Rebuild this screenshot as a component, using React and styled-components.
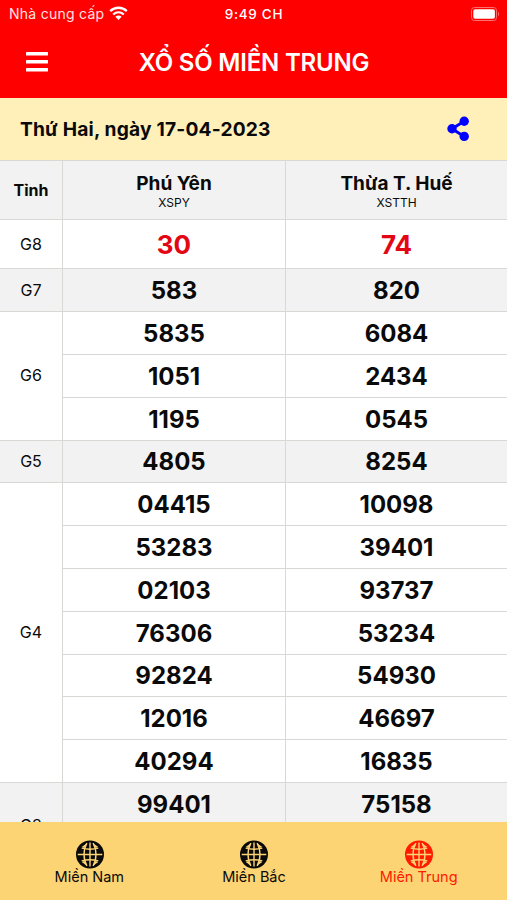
import React from 'react';
import styled, { createGlobalStyle } from 'styled-components';

const colors = {
  primary: '#ff0000',
  number: '#e30613',
  date: '#fff0b9',
  tab: '#fcd474',
  line: '#dad8d5',
  shade: '#f2f2f2',
};

const GlobalStyle = createGlobalStyle`
  * {
    box-sizing: border-box;
  }
  body {
    margin: 0;
    background: #fff;
    color: #0a0a0a;
    font-family: Inter, 'Liberation Sans', sans-serif;
  }
`;

const Screen = styled.div`
  height: 900px;
  display: flex;
  flex-direction: column;
  overflow: hidden;
`;

const Header = styled.header`
  flex: none;
  height: 98px;
  background: ${colors.primary};
  color: #fff;
`;

const StatusBar = styled.div`
  height: 27px;
  display: grid;
  grid-template-columns: 1fr auto 1fr;
  align-items: center;
  padding: 0 6px 0 9px;
`;

const Carrier = styled.div`
  display: flex;
  align-items: center;
  gap: 5px;
  font-size: 14px;
  letter-spacing: 0.26px;
  color: #ffe3e3;
`;

const Clock = styled.div`
  font-size: 13.5px;
  font-weight: 500;
  letter-spacing: 0.7px;
  padding-right: 2px;
`;

const BatterySlot = styled.div`
  display: flex;
  justify-content: flex-end;
`;

const TitleBar = styled.div`
  height: 70px;
  display: grid;
  grid-template-columns: 48px 1fr 48px;
  align-items: center;
  padding: 0 0 0 26px;
`;

const Title = styled.h1`
  margin: 0;
  padding: 2px 25px 0 0;
  text-align: center;
  font-size: 24px;
  line-height: 30px;
  font-weight: 600;
  letter-spacing: -0.2px;
  white-space: nowrap;
`;

const DateBar = styled.div`
  flex: none;
  height: 62px;
  display: flex;
  align-items: center;
  justify-content: space-between;
  padding: 0 37px 0 20px;
  background: ${colors.date};
  font-size: 19.2px;
  font-weight: 700;
  letter-spacing: 0.18px;
`;

const Results = styled.main`
  flex: 1;
  min-height: 0;
  overflow: hidden;
`;

const Row = styled.section`
  display: grid;
  grid-template-columns: 62px 1fr;
  border-top: 1px solid ${colors.line};
  background: ${({ $shaded }) => ($shaded ? colors.shade : '#fff')};
`;

const Label = styled.div`
  display: flex;
  align-items: center;
  justify-content: center;
  padding-bottom: 1px;
  font-size: 16px;
  font-weight: ${({ $bold }) => ($bold ? 700 : 400)};
`;

const Numbers = styled.div`
  display: grid;
  grid-template-columns: 223px 1fr;
`;

const Cell = styled.div`
  height: ${({ $height }) => $height}px;
  display: flex;
  flex-direction: column;
  align-items: center;
  justify-content: center;
  padding-top: 1px;
  border-left: 1px solid ${colors.line};
  border-top: ${({ $divided }) => ($divided ? `1px solid ${colors.line}` : 'none')};
  color: ${({ $special }) => ($special ? colors.number : '#0a0a0a')};
  font-size: ${({ $special }) => ($special ? 26 : 24)}px;
  font-weight: 700;
`;

const Province = styled.div`
  font-size: 19px;
  line-height: 24px;
  font-weight: 700;
`;

const Code = styled.div`
  font-size: 12px;
  line-height: 14px;
  font-weight: 400;
`;

const TabBar = styled.nav`
  flex: none;
  height: 78px;
  display: grid;
  grid-template-columns: repeat(3, 1fr);
  padding: 0 6px 0 7px;
  background: ${colors.tab};
`;

const Tab = styled.div`
  display: flex;
  flex-direction: column;
  align-items: center;
  padding-top: 18px;
  color: ${({ $active }) => ($active ? '#ff1a00' : '#0a0a0a')};
  font-size: 14.5px;
  line-height: 16px;
`;

const WifiIcon = () => (
  <svg width="19" height="15" viewBox="0 0 19 15" fill="none" stroke="#fff" strokeWidth="2.3">
    <path d="M1.2 5.2C6 .6 13 .6 17.8 5.2M4.2 8.5C7.4 5.6 11.6 5.6 14.8 8.5" />
    <path d="M6.4 10.8C8.3 9.2 10.7 9.2 12.6 10.8L9.5 14Z" fill="#fff" stroke="none" />
  </svg>
);

const BatteryIcon = () => (
  <svg width="30" height="14" viewBox="0 0 30 14">
    <rect x=".5" y=".5" width="25" height="13" rx="3" fill="none" stroke="#ff7070" />
    <rect x="2.3" y="2.3" width="21.6" height="9.4" rx="1.8" fill="#fff" />
    <path d="M27 4.5Q29.2 7 27 9.5Z" fill="#ff7070" />
  </svg>
);

const MenuIcon = () => (
  <svg width="22" height="20" viewBox="0 0 22 20" fill="#fff">
    <rect y="0" width="22" height="3.6" rx=".5" />
    <rect y="8" width="22" height="3.6" rx=".5" />
    <rect y="16" width="22" height="3.6" rx=".5" />
  </svg>
);

const ShareIcon = () => (
  <svg width="23" height="26" viewBox="0 0 23 26" fill="#0000ff">
    <path d="M17.2 5.2L5 12.8L17.2 20.4" fill="none" stroke="#0000ff" strokeWidth="3" />
    <circle cx="17.2" cy="5.2" r="4.7" />
    <circle cx="5" cy="12.8" r="4.7" />
    <circle cx="17.2" cy="20.4" r="4.7" />
  </svg>
);

const GlobeIcon = () => (
  <svg width="29" height="29" viewBox="0 0 29 29">
    <circle cx="15" cy="14.5" r="14" fill="currentColor" />
    <g fill="none" stroke={colors.tab} strokeWidth="1.4">
      <path d="M15 2.5V26.5M2.7 14.5H27.3" />
      <path d="M6.7 8.1Q15 10.3 23.3 8.1M6.7 20.9Q15 18.7 23.3 20.9" />
      <path d="M11.9 3.1C8.1 9.5 8.1 19.5 11.9 25.9M18.1 3.1C21.9 9.5 21.9 19.5 18.1 25.9" />
    </g>
    <g fill={colors.tab}>
      <path d="M12.3 3.1L6.7 6.9L9.3 8.1ZM17.7 3.1L23.3 6.9L20.7 8.1Z" />
      <path d="M12.3 25.9L6.7 22.1L9.3 20.9ZM17.7 25.9L23.3 22.1L20.7 20.9Z" />
    </g>
  </svg>
);

const prizes = [
  { label: 'G8', values: [['30', '74']], height: 48, special: true },
  { label: 'G7', values: [['583', '820']], shaded: true },
  { label: 'G6', values: [['5835', '6084'], ['1051', '2434'], ['1195', '0545']] },
  { label: 'G5', values: [['4805', '8254']], shaded: true },
  {
    label: 'G4',
    values: [
      ['04415', '10098'],
      ['53283', '39401'],
      ['02103', '93737'],
      ['76306', '53234'],
      ['92824', '54930'],
      ['12016', '46697'],
      ['40294', '16835'],
    ],
  },
  { label: 'G3', values: [['99401', '75158'], ['', '']], shaded: true },
];

// the first line of a prize gets its top border from the row
const lineHeight = (row) => (row === 0 ? 41.8 : 42.8);

const tabs = ['Miền Nam', 'Miền Bắc', 'Miền Trung'];

const App = () => {
  return (
    <Screen>
      <GlobalStyle />
      <Header>
        <StatusBar>
          <Carrier>
            Nhà cung cấp
            <WifiIcon />
          </Carrier>
          <Clock>9:49 CH</Clock>
          <BatterySlot>
            <BatteryIcon />
          </BatterySlot>
        </StatusBar>
        <TitleBar>
          <MenuIcon />
          <Title>XỔ SỐ MIỀN TRUNG</Title>
        </TitleBar>
      </Header>
      <DateBar>
        Thứ Hai, ngày 17-04-2023
        <ShareIcon />
      </DateBar>
      <Results>
        <Row $shaded>
          <Label $bold>Tỉnh</Label>
          <Numbers>
            <Cell $height={58.4}>
              <Province>Phú Yên</Province>
              <Code>XSPY</Code>
            </Cell>
            <Cell $height={58.4}>
              <Province>Thừa T. Huế</Province>
              <Code>XSTTH</Code>
            </Cell>
          </Numbers>
        </Row>
        {prizes.map(({ label, values, shaded, special, height }) => (
          <Row key={label} $shaded={shaded}>
            <Label>{label}</Label>
            <Numbers>
              {values.map((pair, row) =>
                pair.map((value, col) => (
                  <Cell
                    key={`${row}-${col}`}
                    $height={height || lineHeight(row)}
                    $special={special}
                    $divided={row > 0}
                  >
                    {value}
                  </Cell>
                ))
              )}
            </Numbers>
          </Row>
        ))}
      </Results>
      <TabBar>
        {tabs.map((name) => (
          <Tab key={name} $active={name === 'Miền Trung'}>
            <GlobeIcon />
            {name}
          </Tab>
        ))}
      </TabBar>
    </Screen>
  );
};

export default App;
